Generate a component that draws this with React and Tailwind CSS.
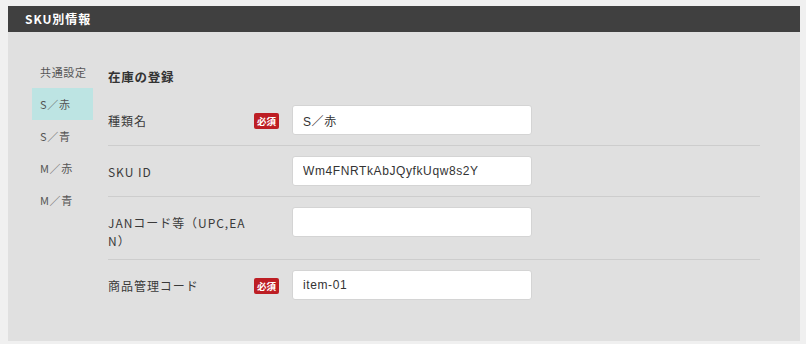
const SKUS = ['共通設定', 'S／赤', 'S／青', 'M／赤', 'M／青'];

const ROWS = [
  { label: '種類名', required: true, value: 'S／赤' },
  { label: 'SKU ID', required: false, value: 'Wm4FNRTkAbJQyfkUqw8s2Y' },
  { label: 'JANコード等（UPC,EAN）', required: false, value: '' },
  { label: '商品管理コード', required: true, value: 'item-01' },
];

const jp = "font-['Noto_Sans_CJK_JP','Noto_Sans',sans-serif]";

export default function App() {
  return (
    <div className={`min-h-[344px] w-[806px] bg-[#f0f0f0] pt-[6px] ${jp}`}>
      <div className="mx-[8px] w-[792px] bg-[#e0e0e0] pb-[31px]">
        <div className="flex h-[26px] items-center bg-[#404040] px-[17px]">
          <span className="text-[12px] font-bold tracking-[0.08em] text-white">SKU別情報</span>
        </div>

        <div className="flex pl-[24px] pt-[24px]">
          <ul className="w-[61px] shrink-0">
            {SKUS.map((s, i) => (
              <li key={s}
                className={`flex h-[32px] items-center pl-[8px] text-[11px] tracking-[0.06em] text-[#555] ${i === 1 ? 'bg-[#bde4e3]' : ''}`}>
                {s}
              </li>
            ))}
          </ul>

          <div className="ml-[15px] w-[652px]">
            <h3 className="pt-[11px] text-[12.5px] font-bold leading-[20px] tracking-[0.06em] text-[#333]">在庫の登録</h3>
            <div className="mt-[8px]">
              {ROWS.map((r, i) => (
                <div key={r.label}
                  className={`flex items-start py-[10px] ${i < ROWS.length - 1 ? 'border-b border-[#cdcdcd]' : ''}`}>
                  <div className="w-[140px] shrink-0 break-all pt-[7px] text-[12px] leading-[17.5px] tracking-[0.08em] text-[#3a3a3a]">
                    {r.label}
                  </div>
                  <div className="flex w-[44px] shrink-0 justify-start pl-[6px] pt-[8px]">
                    {r.required && (
                      <span className="flex h-[16px] w-[25px] items-center justify-center rounded-[2px] bg-[#bd1e24] text-[9.5px] font-bold text-white">
                        必須
                      </span>
                    )}
                  </div>
                  <input
                    readOnly
                    value={r.value}
                    className="h-[30px] w-[240px] rounded-[3px] border border-[#d4d4d4] bg-white px-[10px] font-['Liberation_Sans','Noto_Sans_CJK_JP',sans-serif] text-[12px] tracking-[0.05em] text-[#333] outline-none"
                  />
                </div>
              ))}
            </div>
          </div>
        </div>
      </div>
    </div>
  );
}
